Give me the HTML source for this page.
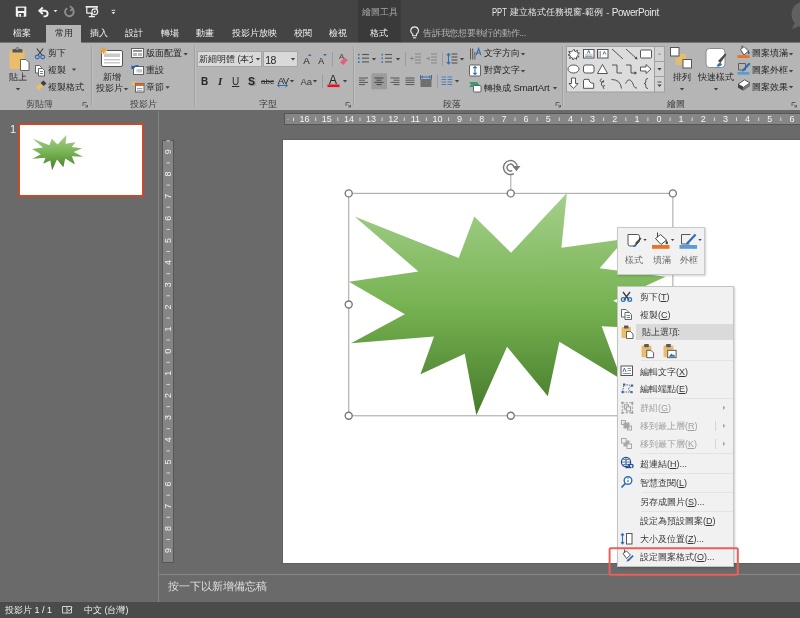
<!DOCTYPE html>
<html lang="zh-Hant">
<head>
<meta charset="utf-8">
<title>PPT 建立格式任務視窗-範例 - PowerPoint</title>
<style>
*{box-sizing:border-box;margin:0;padding:0}
html,body{width:800px;height:618px;overflow:hidden;background:#6a6a6a}
body{position:relative;font-family:"Liberation Sans",sans-serif;font-size:10px;color:#262626;line-height:1}
.abs,.t{position:absolute}
.t{white-space:nowrap;line-height:1;will-change:opacity}
#titlebar{left:0;top:0;width:800px;height:42px;background:#444}
#ctx{left:358px;top:0;width:43px;height:42px;background:#3a3a3a}
#ribbon{left:0;top:42px;width:800px;height:69px;background:#b5b5b5;box-shadow:0 1px 0 #5e5e5e;border-top:1px solid #747474}
#tabactive{left:46px;top:25px;width:35px;height:19px;background:#b5b5b5}
.tab{top:29px;color:#f0f0f0;font-size:9px}
.la{font-size:10px;letter-spacing:-0.550px}
.gl{color:#3c3c3c;font-size:8.800px;margin-top:0.500px}
.sep{top:46px;width:1px;height:60px;background:#a0a0a0;box-shadow:1px 0 0 #c0c0c0}
.rt{color:#262626;font-size:8.800px;margin-top:0.400px}
#work{left:0;top:110px;width:800px;height:490px;background:#6a6a6a}
#status{left:0;top:602px;width:800px;height:16px;background:#4b4b4b}
#slide{left:283px;top:139.500px;width:517px;height:423.500px;background:#fff;box-shadow:0 0 0 1px #606060}
#thumb{left:19.300px;top:124.300px;width:123.800px;height:71.400px;background:#fff;box-shadow:inset 0 0 0 1px #d9451f,0 0 0 0.700px #d9451f}
#vdiv{left:157.500px;top:111px;width:1.500px;height:491px;background:#848484}
#hruler{left:285px;top:113px;width:515px;height:12px;background:#8a8a8a}
#vruler{left:162px;top:140px;width:12px;height:423px;background:#8a8a8a}
#notesline{left:159px;top:574px;width:641px;height:1px;background:#868686}
.m{color:#383838;font-size:9px;left:640px}
.md{color:#a0a0a0}
.msep{left:641px;width:92px;height:1px;background:#e3e3e3}
</style>
</head>
<body>
<div class="abs" id="titlebar"></div>
<div class="abs" id="ctx"></div>
<div class="abs" id="ribbon"></div>
<div class="abs" id="tabactive"></div>
<div class="abs" id="work"></div>
<div class="abs" id="vdiv"></div>
<div class="abs" id="thumb"></div>
<svg class="abs" style="left:0;top:110px;width:800px;height:460px;font-family:'Liberation Sans',sans-serif;font-size:9px;will-change:opacity" viewBox="0 110 800 460">
<rect x="284.500" y="113.500" width="520" height="11" fill="#868686" stroke="#565656" stroke-width="1"/><rect x="162.500" y="140.500" width="11" height="422" fill="#858585" stroke="#565656" stroke-width="1"/><g fill="#f4f4f4"><text x="304.6" y="122.300" text-anchor="middle">16</text><text x="326.8" y="122.300" text-anchor="middle">15</text><text x="348.9" y="122.300" text-anchor="middle">14</text><text x="371.1" y="122.300" text-anchor="middle">13</text><text x="393.2" y="122.300" text-anchor="middle">12</text><text x="415.4" y="122.300" text-anchor="middle">11</text><text x="437.5" y="122.300" text-anchor="middle">10</text><text x="459.6" y="122.300" text-anchor="middle">9</text><text x="481.8" y="122.300" text-anchor="middle">8</text><text x="504.0" y="122.300" text-anchor="middle">7</text><text x="526.1" y="122.300" text-anchor="middle">6</text><text x="548.2" y="122.300" text-anchor="middle">5</text><text x="570.4" y="122.300" text-anchor="middle">4</text><text x="592.5" y="122.300" text-anchor="middle">3</text><text x="614.7" y="122.300" text-anchor="middle">2</text><text x="636.9" y="122.300" text-anchor="middle">1</text><text x="659.0" y="122.300" text-anchor="middle">0</text><text x="681.1" y="122.300" text-anchor="middle">1</text><text x="703.3" y="122.300" text-anchor="middle">2</text><text x="725.5" y="122.300" text-anchor="middle">3</text><text x="747.6" y="122.300" text-anchor="middle">4</text><text x="769.8" y="122.300" text-anchor="middle">5</text><text x="791.9" y="122.300" text-anchor="middle">6</text><text transform="translate(171.300 151.8) rotate(-90)" text-anchor="middle">9</text><text transform="translate(171.300 174.0) rotate(-90)" text-anchor="middle">8</text><text transform="translate(171.300 196.2) rotate(-90)" text-anchor="middle">7</text><text transform="translate(171.300 218.3) rotate(-90)" text-anchor="middle">6</text><text transform="translate(171.300 240.4) rotate(-90)" text-anchor="middle">5</text><text transform="translate(171.300 262.6) rotate(-90)" text-anchor="middle">4</text><text transform="translate(171.300 284.8) rotate(-90)" text-anchor="middle">3</text><text transform="translate(171.300 306.9) rotate(-90)" text-anchor="middle">2</text><text transform="translate(171.300 329.1) rotate(-90)" text-anchor="middle">1</text><text transform="translate(171.300 351.2) rotate(-90)" text-anchor="middle">0</text><text transform="translate(171.300 373.3) rotate(-90)" text-anchor="middle">1</text><text transform="translate(171.300 395.5) rotate(-90)" text-anchor="middle">2</text><text transform="translate(171.300 417.6) rotate(-90)" text-anchor="middle">3</text><text transform="translate(171.300 439.8) rotate(-90)" text-anchor="middle">4</text><text transform="translate(171.300 461.9) rotate(-90)" text-anchor="middle">5</text><text transform="translate(171.300 484.1) rotate(-90)" text-anchor="middle">6</text><text transform="translate(171.300 506.2) rotate(-90)" text-anchor="middle">7</text><text transform="translate(171.300 528.4) rotate(-90)" text-anchor="middle">8</text><text transform="translate(171.300 550.5) rotate(-90)" text-anchor="middle">9</text></g><path d="M315.7 117.500v3.500M337.8 117.500v3.500M360.0 117.500v3.500M382.1 117.500v3.500M404.3 117.500v3.500M426.4 117.500v3.500M448.6 117.500v3.500M470.7 117.500v3.500M492.9 117.500v3.500M515.0 117.500v3.500M537.2 117.500v3.500M559.3 117.500v3.500M581.5 117.500v3.500M603.6 117.500v3.500M625.8 117.500v3.500M647.9 117.500v3.500M670.1 117.500v3.500M692.2 117.500v3.500M714.4 117.500v3.500M736.5 117.500v3.500M758.7 117.500v3.500M780.8 117.500v3.500M293.5 117.500v3.500M288.0 118.800v1M166.500 162.9h3.500M166.500 185.1h3.500M166.500 207.2h3.500M166.500 229.4h3.500M166.500 251.5h3.500M166.500 273.7h3.500M166.500 295.8h3.500M166.500 318.0h3.500M166.500 340.1h3.500M166.500 362.3h3.500M166.500 384.4h3.500M166.500 406.6h3.500M166.500 428.7h3.500M166.500 450.9h3.500M166.500 473.0h3.500M166.500 495.2h3.500M166.500 517.3h3.500M166.500 539.5h3.500M166.500 140.8h3.500" stroke="#d8d8d8" stroke-width="1" fill="none"/></svg>
<div class="abs" id="slide"></div>
<div class="abs" id="notesline"></div>
<div class="abs" id="status"></div>
<div class="t" id="ttl" style="left:492.100px;top:7.500px;font-size:9.090px;color:#e6e6e6"><span class="la" style="letter-spacing:0;font-size:9.600px;display:inline-block;transform:scale(.8,1.040);transform-origin:0 80%">PPT</span></div><div class="t tt" style="left:510.100px;top:7px;font-size:9.090px;color:#e6e6e6"><span class="la" style="visibility:hidden;letter-spacing:-6.670px">P</span>建立格式任務視窗</div><div class="t tt" style="left:582.100px;top:7.500px;font-size:9.090px;color:#e6e6e6"><span class="la" style="visibility:hidden;letter-spacing:-6.670px">P</span>-</div><div class="t tt" style="left:585.400px;top:7px;font-size:9.090px;color:#e6e6e6"><span class="la" style="visibility:hidden;letter-spacing:-6.670px">P</span>範例</div><div class="t tt" style="left:606.300px;top:7.500px;font-size:9.090px;color:#e6e6e6"><span class="la" style="visibility:hidden;letter-spacing:-6.670px">P</span>-</div><div class="t tt" style="left:611.700px;top:7.500px;font-size:9.090px;color:#e6e6e6"><span class="la" style="letter-spacing:-0.400px">PowerPoint</span></div>
<div class="t" style="left:362px;top:8px;font-size:9px;color:#a6a6a6">繪圖工具</div>
<div class="t tab" style="left:13px">檔案</div>
<div class="t tab" style="left:54.500px;color:#2b2b2b">常用</div>
<div class="t tab" style="left:90px">插入</div>
<div class="t tab" style="left:125px">設計</div>
<div class="t tab" style="left:161px">轉場</div>
<div class="t tab" style="left:196px">動畫</div>
<div class="t tab" style="left:232px">投影片放映</div>
<div class="t tab" style="left:294px">校閱</div>
<div class="t tab" style="left:329px">檢視</div>
<div class="t tab" style="left:370px">格式</div>
<div class="t tab" style="left:423px;color:#b2b2b2;letter-spacing:-0.250px">告訴我您想要執行的動作...</div>
<svg class="abs" style="left:0;top:0;width:440px;height:42px" viewBox="0 0 440 42">
<rect x="15.800" y="6.500" width="10.500" height="10.200" rx="0.800" fill="#f2f2f2"/><rect x="17.800" y="7.800" width="6.500" height="3.200" fill="#444"/><rect x="18.300" y="13" width="5.500" height="3.700" fill="#444"/><rect x="19.300" y="14" width="1.700" height="2.700" fill="#f2f2f2"/>
<g fill="none" stroke="#f2f2f2"><path d="M40 10.800H45.500A2.900 2.900 0 0 1 45.500 16.400H43.500" stroke-width="1.900"/><path d="M42.800 7.500L39.300 10.800L42.800 14.100" stroke-width="1.900"/></g>
<path d="M53.600 10h3.800l-1.900 2.300z" fill="#e6e6e6"/>
<g fill="none" stroke="#909090"><path d="M72 8.500A4.300 4.300 0 1 1 67.200 8.200" stroke-width="1.900"/><path d="M69.800 6.200L72.800 8.300L70.200 11" stroke-width="1.500"/></g>
<g fill="none" stroke="#f2f2f2" stroke-width="1.300"><path d="M85.500 6.800h12.500"/><rect x="86.800" y="6.800" width="10" height="6.300" stroke-width="1.200"/><path d="M91.800 13.100V16M88.800 16.600H94.800"/><circle cx="94.800" cy="11.800" r="2.900" fill="#444" stroke-width="1.100"/><path d="M94 10.500L96.200 11.800L94 13.100Z" fill="#f2f2f2" stroke="none"/></g>
<path d="M111.600 10.300h3.600" stroke="#e0e0e0" stroke-width="1"/><path d="M111.500 12h3.800l-1.900 2.200z" fill="#e0e0e0"/>
<g fill="none" stroke="#e8e8e8" stroke-width="1.1" transform="translate(2.2 0.3)"><path d="M410.5 35.5V33.8C408.8 32.6 408.3 31 408.6 29.6A3.9 3.9 0 0 1 416.2 29.6C416.5 31 416 32.6 414.300 33.8V35.500Z"/><path d="M410.8 37.500H414"/></g>
</svg>
<svg class="abs" style="left:780px;top:0;width:20px;height:40px" viewBox="780 0 20 40"><circle cx="804.500" cy="14.500" r="13" fill="#616161"/><path d="M791.800 29.200l3-6.500 5.500 3z" fill="#616161"/></svg>
<!--TITLE-->
<div class="abs sep" style="left:91px"></div>
<div class="abs sep" style="left:194px"></div>
<div class="abs sep" style="left:353px"></div>
<div class="abs sep" style="left:562px"></div>
<div class="t rt" style="left:9px;top:73px">貼上</div>
<div class="t rt" style="left:48px;top:49px">剪下</div>
<div class="t rt" style="left:48px;top:66px">複製</div>
<div class="t rt" style="left:48px;top:83px">複製格式</div>
<div class="t gl" style="left:26px;top:99px">剪貼簿</div>
<div class="t rt" style="left:103px;top:73px">新增</div>
<div class="t rt" style="left:96px;top:84px">投影片</div>
<div class="t rt" style="left:146px;top:49px">版面配置</div>
<div class="t rt" style="left:146px;top:66px">重設</div>
<div class="t rt" style="left:146px;top:83px">章節</div>
<div class="t gl" style="left:130px;top:99px">投影片</div>
<div class="abs" style="left:197px;top:51px;width:65px;height:16px;background:#d9d9d9;border:1px solid #a6a6a6"></div>
<div class="abs" style="left:263px;top:51px;width:35px;height:16px;background:#d9d9d9;border:1px solid #a6a6a6"></div>
<div class="t rt" style="left:199px;top:55px;width:54px;overflow:hidden">新細明體 (本文</div>
<div class="t rt" style="left:265.300px;top:54.300px;font-size:10.500px;letter-spacing:-0.600px">18</div>
<div class="t gl" style="left:259px;top:99px">字型</div>
<div class="t rt" style="left:201px;top:76.500px;font-weight:bold;font-size:10px">B</div>
<div class="t rt" style="left:218px;top:76px;font-style:italic;font-weight:bold;font-family:'Liberation Serif',serif;font-size:11px">I</div>
<div class="t rt" style="left:232px;top:76.500px;font-size:10px;text-decoration:underline">U</div>
<div class="t rt" style="left:248px;top:76px;font-size:10.500px;font-weight:bold;text-shadow:1px 1px 1px #888">S</div>
<div class="t rt" style="left:261px;top:77.500px;font-size:8px;text-decoration:line-through;color:#2e2e2e">abc</div>
<div class="t rt" style="left:277.800px;top:75.500px;font-size:9.500px;letter-spacing:-0.800px">AV</div>
<div class="t rt" style="left:300.500px;top:77px;font-size:9.500px;color:#3a3a3a">Aa</div>
<div class="t rt" style="left:329px;top:74px;font-size:12px">A</div>
<div class="t rt" style="left:303.300px;top:55.200px;font-size:9.800px;letter-spacing:-.5px">A</div>
<div class="t rt" style="left:318.300px;top:56.200px;font-size:8.800px">A</div>
<div class="t rt" style="left:339px;top:53px;font-size:8px;color:#444">A</div>
<div class="t rt" style="left:484px;top:49px">文字方向</div>
<div class="t rt" style="left:484px;top:66px">對齊文字</div>
<div class="t rt" style="left:484px;top:83px">轉換成 <span style="font-size:9.500px;letter-spacing:-0.200px">SmartArt</span></div>
<div class="t gl" style="left:443px;top:99px">段落</div>
<div class="t rt" style="left:673px;top:73px">排列</div>
<div class="t rt" style="left:698px;top:73px">快速樣式</div>
<div class="t rt" style="left:751.5px;top:49px">圖案填滿</div>
<div class="t rt" style="left:751.5px;top:66px">圖案外框</div>
<div class="t rt" style="left:751.5px;top:82.5px">圖案效果</div>
<div class="t gl" style="left:667px;top:99px">繪圖</div>
<svg class="abs" style="left:0;top:42px;width:800px;height:68px" viewBox="0 42 800 68">
<path d="M15.8 88h4.4l-2.2 2.4z" fill="#444"/><path d="M71.8 68.500h4.400l-2.200 2.400z" fill="#444"/><path d="M123.8 88h4.4l-2.2 2.4z" fill="#444"/><path d="M183.500 53h4.400l-2.200 2.400z" fill="#444"/><path d="M165.400 86.300h4.400l-2.200 2.400z" fill="#444"/><path d="M255.8 58h4.4l-2.2 2.4z" fill="#444"/><path d="M290.8 58h4.4l-2.2 2.4z" fill="#444"/><path d="M289.8 80h4.4l-2.2 2.4z" fill="#444"/><path d="M312.8 80h4.4l-2.2 2.4z" fill="#444"/><path d="M342.8 80h4.4l-2.2 2.4z" fill="#444"/><path d="M371.8 58h4.4l-2.2 2.4z" fill="#444"/><path d="M395.8 58h4.4l-2.2 2.4z" fill="#444"/><path d="M459.8 58h4.4l-2.2 2.4z" fill="#444"/><path d="M454.8 80h4.4l-2.2 2.4z" fill="#444"/><path d="M520.8 53h4.4l-2.2 2.4z" fill="#444"/><path d="M520.8 70h4.4l-2.2 2.4z" fill="#444"/><path d="M552.8 87h4.4l-2.2 2.4z" fill="#444"/><path d="M679.8 88h4.4l-2.2 2.4z" fill="#444"/><path d="M713.8 88h4.4l-2.2 2.4z" fill="#444"/><path d="M788.8 53h4.4l-2.2 2.4z" fill="#444"/><path d="M788.8 70h4.4l-2.2 2.4z" fill="#444"/><path d="M788.8 86h4.4l-2.2 2.4z" fill="#444"/><path d="M83 106.0V102.5H86.5M85 104.5L87.5 107.0M87.5 105.0V107.0H85.5" fill="none" stroke="#555" stroke-width="0.9"/><path d="M346 106.0V102.5H349.5M348 104.5L350.5 107.0M350.5 105.0V107.0H348.5" fill="none" stroke="#555" stroke-width="0.9"/><path d="M556 106.0V102.5H559.5M558 104.5L560.5 107.0M560.5 105.0V107.0H558.5" fill="none" stroke="#555" stroke-width="0.9"/><path d="M792 106.0V102.5H795.5M794 104.5L796.5 107.0M796.5 105.0V107.0H794.5" fill="none" stroke="#555" stroke-width="0.9"/><rect x="9.5" y="50" width="15" height="19" rx="1" fill="#e9bd6a"/><path d="M12.500 52.500v-2.500q0-1 1-1h2q.3-1.700 2-1.700t2 1.700h2q1 0 1 1v2.500z" fill="#555"/><rect x="16.300" y="48.300" width="2.400" height="1.300" fill="#b5b5b5"/><path d="M20.5 59.500h5.500l3 3v8h-8.500z" fill="#fff" stroke="#555" stroke-width="0.9"/><g fill="none" stroke="#3f3f3f" stroke-width="1.2"><path d="M36.800 48.500L42.300 55.500M43.200 48.500L37.700 55.500"/></g><g fill="none" stroke="#2e6db4" stroke-width="1.2"><circle cx="37.300" cy="57" r="1.900"/><circle cx="42.700" cy="57" r="1.900"/></g><g fill="#fff" stroke="#555" stroke-width="0.9"><path d="M35.500 65.500h4l2 2v5.500h-6z"/><path d="M38.500 68.500h4l2 2v5.500h-6z"/></g><path d="M40 71.500h3M40 73.500h3" stroke="#2e6db4" stroke-width="0.8"/><path d="M36 87.500l4.500-4.500 3 3-4.500 4.500z" fill="#e9bd6a"/><path d="M40.500 83l3-2.500 3 3-2.800 2.500z" fill="#3f3f3f"/><rect x="101.500" y="50.500" width="21" height="16" rx="1.500" fill="#fff" stroke="#555" stroke-width="1"/><rect x="104" y="53.500" width="16" height="3.500" fill="#c9c9c9"/><rect x="104" y="59" width="16" height="1.500" fill="#c9c9c9"/><rect x="104" y="62" width="16" height="1.500" fill="#c9c9c9"/><g stroke="#e5a43b" stroke-width="1.100"><path d="M100 50.500h7M103.500 47v7M101 48l5 5M106 48l-5 5"/></g><rect x="131.500" y="48.500" width="12" height="9" fill="#fff" stroke="#555" stroke-width="0.9"/><rect x="133" y="50" width="9" height="1.800" fill="#8a8a8a"/><rect x="133" y="53" width="4" height="3" fill="#b9b9b9"/><rect x="138" y="53" width="4" height="3" fill="#b9b9b9"/><rect x="133.500" y="66.500" width="10" height="8" fill="#fff" stroke="#555" stroke-width="0.9"/><rect x="136.500" y="69" width="5.500" height="3.500" fill="#c9c9c9"/><path d="M138.500 66.200a4 4 0 0 0-5.500 2.300" fill="none" stroke="#1f5fa8" stroke-width="1.500"/><path d="M131.300 65.300l.3 4.200 3.600-1.700z" fill="#1f5fa8"/><rect x="131.500" y="81.500" width="4" height="3.500" fill="#e9bd6a"/><rect x="135.500" y="83.500" width="8.500" height="8.500" fill="#fff" stroke="#555" stroke-width="0.9"/><rect x="135.500" y="83.500" width="8.500" height="2.500" fill="#d9683c"/><path d="M137 88.500h5.500M137 90.300h5.500" stroke="#888" stroke-width="0.8"/><path d="M308 56h3.600l-1.800-2.300z" fill="#2e6db4"/><path d="M323.200 54h3.600l-1.800 2.300z" fill="#2e6db4"/><path d="M332.500 52v14" stroke="#9c9c9c" stroke-width="1"/><path d="M322.500 75v13" stroke="#9c9c9c" stroke-width="1"/><path d="M340 62.500l4.500-5 3.300 2.600-4.500 5z" fill="#e0607e"/><path d="M277.500 85.500h10M279.500 83.800l-2 1.700 2 1.700M285.500 83.800l2 1.700-2 1.700" fill="none" stroke="#2e6db4" stroke-width="1"/><rect x="327.500" y="84.500" width="12" height="2.600" fill="#e81123"/><path d="M362 54.5h7" stroke="#555" stroke-width="1.1"/><path d="M362 58.2h7" stroke="#555" stroke-width="1.1"/><path d="M362 61.9h7" stroke="#555" stroke-width="1.1"/><rect x="358" y="53.8" width="1.600" height="1.600" fill="#2e6db4"/><rect x="358" y="57.5" width="1.600" height="1.600" fill="#2e6db4"/><rect x="358" y="61.199999999999996" width="1.600" height="1.600" fill="#2e6db4"/><path d="M385 54.5h7" stroke="#555" stroke-width="1.1"/><path d="M385 58.2h7" stroke="#555" stroke-width="1.1"/><path d="M385 61.9h7" stroke="#555" stroke-width="1.1"/><rect x="381.500" y="53.8" width="1.300" height="1.800" fill="#2e6db4"/><rect x="381.500" y="57.5" width="1.300" height="1.800" fill="#2e6db4"/><rect x="381.500" y="61.199999999999996" width="1.300" height="1.800" fill="#2e6db4"/><path d="M405.500 52v14M442.500 52v14M437.500 75v13" stroke="#9c9c9c" stroke-width="1"/><path d="M415 54h6" stroke="#8a8a8a" stroke-width="1.1"/><path d="M415 57h6" stroke="#8a8a8a" stroke-width="1.1"/><path d="M415 60h6" stroke="#8a8a8a" stroke-width="1.1"/><path d="M415 63h6" stroke="#8a8a8a" stroke-width="1.1"/><path d="M410.500 58.500h4M412.300 56.800l-1.800 1.700 1.800 1.700" fill="none" stroke="#8a8a8a" stroke-width="1"/><path d="M431 54h6" stroke="#8a8a8a" stroke-width="1.1"/><path d="M431 57h6" stroke="#8a8a8a" stroke-width="1.1"/><path d="M431 60h6" stroke="#8a8a8a" stroke-width="1.1"/><path d="M431 63h6" stroke="#8a8a8a" stroke-width="1.1"/><path d="M426 58.500h4M428.200 56.800l1.800 1.700-1.800 1.700" fill="none" stroke="#8a8a8a" stroke-width="1"/><path d="M451.5 54h6" stroke="#555" stroke-width="1.1"/><path d="M451.5 57h6" stroke="#555" stroke-width="1.1"/><path d="M451.5 60h6" stroke="#555" stroke-width="1.1"/><path d="M451.5 63h6" stroke="#555" stroke-width="1.1"/><path d="M448.500 53.500v10.500M446.800 55.300l1.700-1.800 1.700 1.800M446.800 62.200l1.700 1.800 1.700-1.800" fill="none" stroke="#2e6db4" stroke-width="1.100"/><rect x="371.500" y="73.300" width="15.500" height="16" fill="#9b9b9b"/><path d="M359 78.00h9" stroke="#555" stroke-width="1"/><path d="M359 80.20h6" stroke="#555" stroke-width="1"/><path d="M359 82.40h9" stroke="#555" stroke-width="1"/><path d="M359 84.60h6" stroke="#555" stroke-width="1"/><path d="M374.5 78.00h9" stroke="#444" stroke-width="1"/><path d="M376.5 80.20h5" stroke="#444" stroke-width="1"/><path d="M374.5 82.40h9" stroke="#444" stroke-width="1"/><path d="M376.5 84.60h5" stroke="#444" stroke-width="1"/><path d="M390.5 78.00h9" stroke="#555" stroke-width="1"/><path d="M393.5 80.20h6" stroke="#555" stroke-width="1"/><path d="M390.5 82.40h9" stroke="#555" stroke-width="1"/><path d="M393.5 84.60h6" stroke="#555" stroke-width="1"/><path d="M405.5 78.00h9" stroke="#555" stroke-width="1.0"/><path d="M405.5 80.20h9" stroke="#555" stroke-width="1.0"/><path d="M405.5 82.40h9" stroke="#555" stroke-width="1.0"/><path d="M405.5 84.60h9" stroke="#555" stroke-width="1.0"/><rect x="420.500" y="79" width="11" height="8" fill="#6f6f6f"/><path d="M420.500 75v4.500M431.500 75v4.500M421.500 77h9M423 75.700l-1.500 1.300 1.500 1.300M429 75.700l1.500 1.300-1.500 1.300" fill="none" stroke="#2e6db4" stroke-width="1"/><path d="M441.5 77.00h4.7" stroke="#4a7ebb" stroke-width="1.0"/><path d="M441.5 79.50h4.7" stroke="#4a7ebb" stroke-width="1.0"/><path d="M441.5 82.00h4.7" stroke="#4a7ebb" stroke-width="1.0"/><path d="M441.5 84.50h4.7" stroke="#4a7ebb" stroke-width="1.0"/><path d="M447.5 77.00h4.7" stroke="#4a7ebb" stroke-width="1.0"/><path d="M447.5 79.50h4.7" stroke="#4a7ebb" stroke-width="1.0"/><path d="M447.5 82.00h4.7" stroke="#4a7ebb" stroke-width="1.0"/><path d="M447.5 84.50h4.7" stroke="#4a7ebb" stroke-width="1.0"/><path d="M470.500 48.500v11M472.700 48.500v11M474.900 52v7.500" stroke="#555" stroke-width="1"/><path d="M476.300 55l2.300-6.500 2.300 6.500M477.100 53h3.200" fill="none" stroke="#2e6db4" stroke-width="1.100"/><rect x="469.500" y="65" width="11" height="11" rx="1" fill="#fff" stroke="#555" stroke-width="0.9"/><path d="M475 66.500v8M473.300 68.200l1.700-1.700 1.700 1.700M473.300 72.800l1.700 1.700 1.700-1.700" fill="none" stroke="#2e6db4" stroke-width="1.100"/><path d="M469 82h8l2 2.500-2 2.500h-8l2-2.500z" fill="#3a9b6c"/><rect x="473.500" y="85.500" width="7.500" height="6.500" rx="1" fill="#fff" stroke="#555" stroke-width="0.9"/><rect x="566.500" y="46.500" width="88" height="45.500" fill="#dcdcdc" stroke="#a0a0a0" stroke-width="1"/><g fill="#d2d2d2" stroke="#a0a0a0" stroke-width="1"><rect x="654.500" y="46.500" width="10" height="15"/><rect x="654.500" y="61.500" width="10" height="15"/><rect x="654.500" y="76.500" width="10" height="15.500"/></g><path d="M657.500 55h4l-2-2.400z" fill="#a8a8a8"/><path d="M657.3 68h4.4l-2.2 2.4z" fill="#444"/><path d="M657.3 84.5h4.4l-2.2 2.4z" fill="#444"/><path d="M657.500 82h4" stroke="#444" stroke-width="0.9"/><path transform="translate(1 .7)" d="M573 48.500l1 2.500 2.500-1.500-.5 2.500 2.500.5-2 1.700 1.500 2-2.500 0 0 2.500-2-1.500-1.500 2-1-2.500-2.500 1 1-2.500-2.500-1 2.200-1.200-1.500-2.300 2.800.5z" fill="#fff" stroke="#444" stroke-width="0.9"/><rect x="583.500" y="49.500" width="10.500" height="8.500" fill="#fff" stroke="#444" stroke-width="0.9"/><path d="M585 55h7.500M585 56.500h7.500" stroke="#777" stroke-width="0.700"/><path d="M587.300 53.500l1.400-3 1.400 3" fill="none" stroke="#2e6db4" stroke-width="0.9"/><rect x="597.500" y="49.500" width="10.500" height="8.500" fill="#fff" stroke="#444" stroke-width="0.9"/><path d="M599 51v6M600.500 51v6" stroke="#777" stroke-width="0.700"/><path d="M603 54.500l1.400-3 1.400 3" fill="none" stroke="#2e6db4" stroke-width="0.9"/><path d="M612 49l11 10" fill="none" stroke="#444" stroke-width="0.9"/><path d="M626 49l10.500 9.500" fill="none" stroke="#444" stroke-width="0.9"/><path d="M637.500 59.500l-3-0.800 2.200-2.200z" fill="#444"/><rect x="640.500" y="50" width="11" height="8" rx="0.800" fill="#fff" stroke="#444" stroke-width="0.9"/><ellipse cx="573.500" cy="69" rx="5.500" ry="4" fill="#fff" stroke="#444" stroke-width="0.9"/><rect x="583.500" y="65" width="10.500" height="8" rx="2" fill="#fff" stroke="#444" stroke-width="0.9"/><path d="M602.500 64.500l5 9h-10z" fill="#fff" stroke="#444" stroke-width="0.9"/><path d="M612 65h5v8h5" fill="none" stroke="#444" stroke-width="0.9"/><path d="M626 65h5v8h4" fill="none" stroke="#444" stroke-width="0.9"/><path d="M637 73l-2.500-1.700v3.400z" fill="#444"/><path d="M640.500 67h5.500v-2.500l5 4.500-5 4.500v-2.500h-5.500z" fill="#fff" stroke="#444" stroke-width="0.9"/><path d="M571.500 78h4v5.500h2.500l-4.500 5-4.500-5h2.500z" fill="#fff" stroke="#444" stroke-width="0.9"/><path d="M585 79.300h4q0 4 4.700 4v5h-10.200v-7.500q0-1.500 1.500-1.500z" fill="#fff" stroke="#444" stroke-width="0.9"/><path d="M601.500 78.500q-3 2.500 0 3.500t2-1.500q-3 2-2 4.500t3 .500q-2.500 1.500-.500 3.500" fill="none" stroke="#444" stroke-width="0.9"/><path d="M611.500 79.500q9 0 10 9" fill="none" stroke="#444" stroke-width="0.9"/><path d="M625.500 83.500q2.500-5 5-3.200t3 5.200q1.200 2.800 3.500 2.700" fill="none" stroke="#444" stroke-width="0.9"/><path d="M648 78.500q-2.200 0-2.200 1.800v1.700q0 1.500-1.800 1.500q1.800 0 1.800 1.500v1.700q0 1.800 2.200 1.800" fill="none" stroke="#444" stroke-width="0.9"/><rect x="679" y="54" width="7" height="7" fill="#e9bd6a"/><rect x="675.500" y="58" width="7" height="7" fill="#e9bd6a" opacity="0.85"/><rect x="670.500" y="47.500" width="8.500" height="8.500" fill="#fff" stroke="#555" stroke-width="1"/><rect x="683" y="59.500" width="8.500" height="8.500" fill="#fff" stroke="#555" stroke-width="1"/><rect x="706" y="48.500" width="19" height="19" rx="3.500" fill="#fff" stroke="#8a8a8a" stroke-width="1"/><path d="M726.500 54.500l-6 8.500-2.500-2 7-7.500z" fill="#4a4a4a"/><path d="M716.500 66.500q1-3 3.500-4l2 1.700q-1 2.500-5.500 2.300z" fill="#2e6db4"/><path d="M740.500 49.500l3.500-3 4.500 4.500-4.500 4z" fill="#fff" stroke="#444" stroke-width="0.9"/><path d="M742 45.500v3" stroke="#444" stroke-width="0.9"/><path d="M748.500 50.500q1.200 1.600 1.200 2.400a1 1 0 0 1-2 0q0-.8.800-2.400z" fill="#1f5fa8"/><rect x="737.500" y="55.200" width="12" height="2.800" fill="#e8742c"/><path d="M738.500 63.500h7v6.500h-7z" fill="none" stroke="#555" stroke-width="0.9"/><path d="M742.500 69.500l6.500-7 1.500 1.500-6.500 7-2.200.7z" fill="#2e6db4"/><rect x="737.500" y="71.900" width="12" height="2.800" fill="#5b9bd5"/><g transform="translate(0 -1.200)"><path d="M738 85.500l6.500-4.500 5.500 3-6.500 4.500z" fill="#fff" stroke="#444" stroke-width="0.9"/><path d="M738 85.500v3.500l5.500 3v-3.500z" fill="#444"/><path d="M743.500 88.500l6.500-4.500v3.500l-6.500 4.500z" fill="#777"/></g></svg>
<!--RIBBON-->
<svg class="abs" style="left:348.700px;top:193.400px;width:324.150px;height:222.350px;overflow:visible" viewBox="0 0 21600 21600" preserveAspectRatio="none">
<defs><linearGradient id="gg" x1="0" y1="0" x2="0" y2="1"><stop offset="0" stop-color="#a5d08c"/><stop offset="0.5" stop-color="#77b352"/><stop offset="1" stop-color="#467a2b"/></linearGradient></defs>
<path id="seal" fill="url(#gg)" d="M10800 5800L14522 0L14155 5325L18380 4457L16702 7315L21097 8137L17607 10475L21600 13290L16837 12942L18145 18095L14020 14457L13247 19737L10532 14935L8485 21600L7715 15627L4762 17617L5667 13937L135 14587L3722 11775L0 8615L4627 7617L370 2295L7312 6320L8352 2295Z"/>
</svg>
<svg class="abs" style="left:32.300px;top:135px;width:51.200px;height:35.300px" viewBox="0 0 21600 21600" preserveAspectRatio="none"><use href="#seal"/></svg>
<svg class="abs" style="left:340px;top:155px;width:345px;height:270px" viewBox="340 155 345 270">
<g fill="none" stroke="#b2b2b2" stroke-width="1.2"><rect x="348.7" y="193.4" width="324.15" height="222.35"/><line x1="510.77" y1="175" x2="510.77" y2="193.4"/></g>
<g fill="#fff" stroke="#787878" stroke-width="1.4"><circle cx="348.70" cy="193.40" r="3.500"/><circle cx="510.77" cy="193.40" r="3.500"/><circle cx="672.85" cy="193.40" r="3.500"/><circle cx="348.70" cy="304.57" r="3.500"/><circle cx="672.85" cy="304.57" r="3.500"/><circle cx="348.70" cy="415.75" r="3.500"/><circle cx="510.77" cy="415.75" r="3.500"/><circle cx="672.85" cy="415.75" r="3.500"/></g>
<g fill="none" stroke="#787878" stroke-width="1.400"><path d="M517.500 167.500A7 7 0 1 0 513.800 173.700"/><path d="M514 167.500A3.500 3.500 0 1 0 512.200 170.600"/></g>
<path d="M512.500 166L520.500 166L516.300 171.200Z" fill="#787878"/>
</svg>
<!--SHAPE-->
<div class="abs" style="left:617px;top:227px;width:88px;height:48px;background:#f1f1f1;border:1px solid #c8c8c8;box-shadow:1px 1px 2px rgba(0,0,0,.18)"></div>
<div class="t" style="left:625px;top:256.300px;font-size:8.800px;color:#6a6a6a">樣式</div>
<div class="t" style="left:652.5px;top:256.300px;font-size:8.800px;color:#6a6a6a">填滿</div>
<div class="t" style="left:680px;top:256.300px;font-size:8.800px;color:#6a6a6a">外框</div>
<div class="abs" style="left:617px;top:286px;width:117px;height:281px;background:#f1f1f1;border:1px solid #c4c4c4;box-shadow:1px 1px 2px rgba(0,0,0,.2)"></div>
<div class="abs" style="left:636px;top:323.500px;width:97px;height:16px;background:#dadada"></div>
<div class="t m" style="top:293px">剪下(<u>T</u>)</div>
<div class="t m" style="top:310.5px">複製(<u>C</u>)</div>
<div class="t m" style="top:328px;left:641.500px">貼上選項:</div>
<div class="t m" style="top:367.5px">編輯文字(<u>X</u>)</div>
<div class="t m" style="top:385px">編輯端點(<u>E</u>)</div>
<div class="t m md" style="top:404px">群組(<u>G</u>)</div>
<div class="t m md" style="top:422px">移到最上層(<u>R</u>)</div>
<div class="t m md" style="top:440px">移到最下層(<u>K</u>)</div>
<div class="t m" style="top:459.5px">超連結(<u>H</u>)...</div>
<div class="t m" style="top:478.5px">智慧查閱(<u>L</u>)</div>
<div class="t m" style="top:498px">另存成圖片(<u>S</u>)...</div>
<div class="t m" style="top:517px">設定為預設圖案(<u>D</u>)</div>
<div class="t m" style="top:535px">大小及位置(<u>Z</u>)...</div>
<div class="t m" style="top:553px">設定圖案格式(<u>O</u>)...</div>
<div class="abs msep" style="top:360px"></div>
<div class="abs msep" style="top:398px"></div>
<div class="abs msep" style="top:453px"></div>
<div class="abs msep" style="top:473px"></div>
<div class="abs msep" style="top:492px"></div>
<div class="abs msep" style="top:511px"></div>
<div class="abs" style="left:715px;top:421px;width:1px;height:10px;background:#d4d4d4"></div><div class="abs" style="left:715px;top:439px;width:1px;height:10px;background:#d4d4d4"></div>
<svg class="abs" style="left:600px;top:540px;width:150px;height:45px" viewBox="600 540 150 45"><rect x="609.600" y="548.300" width="128.200" height="26.500" rx="1" fill="none" stroke="#e9605a" stroke-width="2"/></svg>
<svg class="abs" style="left:617px;top:227px;width:120px;height:340px" viewBox="617 227 120 340">
<path d="M628 234.500h9.500q2 0 2 2v5l-4.500 4.500h-5q-2 0-2-2z" fill="#fff" stroke="#555" stroke-width="1"/><path d="M641.500 238.500l-5 6-1.500-1.200 5.300-5.800z" fill="#444"/><path d="M633 247q.5-2.500 2.500-3l1.300 1.200q-.8 2-3.800 1.800z" fill="#2e6db4"/><path d="M643.300 239h3.400l-1.700 2.100z" fill="#444"/><path d="M670.900 239h3.400l-1.700 2.100z" fill="#444"/><path d="M698.300 239h3.400l-1.700 2.100z" fill="#444"/><path d="M655.500 238.500l5-4 6 5.500-5.500 4.500z" fill="#fff" stroke="#444" stroke-width="1"/><path d="M657.500 232.500v4.500" stroke="#444" stroke-width="1"/><path d="M666.500 240q1.500 2 1.500 3a1.200 1.200 0 0 1-2.400 0q0-1 .9-3z" fill="#444"/><rect x="652" y="245" width="17.500" height="3.800" fill="#e8742c"/><path d="M681.500 234.500h9M681.500 234.500v9.500h8" fill="none" stroke="#555" stroke-width="1"/><path d="M686.800 242.300l8-8.500 1.600 1.500-8 8.500-2.400.8z" fill="#2e6db4"/><rect x="679.500" y="245" width="17.500" height="3.800" fill="#5b9bd5"/><path d="M623 292l6 8M630 292l-6 8" stroke="#3f3f3f" stroke-width="1.300" fill="none"/><circle cx="623.300" cy="299.500" r="1.900" fill="none" stroke="#2e6db4" stroke-width="1.200"/><circle cx="629.700" cy="299.500" r="1.900" fill="none" stroke="#2e6db4" stroke-width="1.200"/><g fill="#fff" stroke="#555" stroke-width="0.9"><path d="M621.500 309.500h4.500l2 2v5.500h-6.500z"/><path d="M625 312.500h4.500l2 2v5h-6.500z"/></g><path d="M626.500 315.500h3.500M626.500 317.500h3.500" stroke="#2e6db4" stroke-width="0.800"/><g transform="translate(621.5 325) scale(1.0)"><rect x="0" y="2" width="9.500" height="11" rx="0.800" fill="#e9bd6a"/><rect x="2.500" y="0.500" width="4.500" height="3" rx="0.600" fill="#5a5a5a"/><path d="M5 6.500h4l2.500 2.500v4.500h-6.500z" fill="#fff" stroke="#555" stroke-width="0.9"/></g><g transform="translate(641.5 343.5) scale(1.05)"><rect x="0" y="2" width="9.500" height="11" rx="0.800" fill="#e9bd6a"/><rect x="2.500" y="0.500" width="4.500" height="3" rx="0.600" fill="#5a5a5a"/><path d="M5 6.500h4l2.500 2.500v4.500h-6.500z" fill="#fff" stroke="#555" stroke-width="0.9"/></g><g transform="translate(663.500 343.500) scale(1.05)"><rect x="0" y="2" width="9.500" height="11" rx="0.800" fill="#e9bd6a"/><rect x="2.500" y="0.500" width="4.500" height="3" rx="0.600" fill="#5a5a5a"/><rect x="4" y="6.500" width="8" height="7" fill="#fff" stroke="#555" stroke-width="0.9"/><path d="M5 12.500l2.500-3 1.500 1.800 1-1 1.200 2.200z" fill="#2e6db4"/></g><rect x="621" y="366" width="11.500" height="9.500" fill="#fff" stroke="#555" stroke-width="1"/><path d="M622.800 372l1.600-4 1.600 4" fill="none" stroke="#2e6db4" stroke-width="0.9"/><path d="M627.500 368.500h3.500M627.500 370.500h3.500M622.800 373.500h8" stroke="#777" stroke-width="0.800"/><path d="M622.500 392l1.500-7.500 8 1-4 3.500 3.500 3z" fill="none" stroke="#555" stroke-width="0.900" stroke-dasharray="1.500 1"/><g fill="#2e6db4"><rect x="621.500" y="391" width="2.200" height="2.200"/><rect x="623" y="383.500" width="2.200" height="2.200"/><rect x="631" y="384.500" width="2.200" height="2.200"/><rect x="630.500" y="391" width="2.200" height="2.200"/></g><g fill="none" stroke="#9c9c9c" stroke-width="1"><rect x="622.300" y="402.800" width="10" height="10" stroke-dasharray="2.200 1.300"/><rect x="624.300" y="404.800" width="4.200" height="4.200"/><rect x="626.300" y="406.800" width="4.200" height="4.200" fill="#f1f1f1"/></g><g fill="#9c9c9c"><rect x="621.300" y="401.800" width="2" height="2"/><rect x="631.300" y="401.800" width="2" height="2"/><rect x="621.300" y="411.800" width="2" height="2"/><rect x="631.300" y="411.800" width="2" height="2"/></g><g fill="#f1f1f1" stroke="#a8a8a8" stroke-width="1"><rect x="621.500" y="420.500" width="4" height="4"/><rect x="627.500" y="426" width="4" height="4"/><rect x="624" y="423" width="5" height="5" fill="#a8a8a8"/></g><g fill="#f1f1f1" stroke="#a8a8a8" stroke-width="1"><rect x="624" y="441" width="5" height="5" fill="#a8a8a8"/><rect x="621.500" y="438.500" width="4.500" height="4.500"/><rect x="627" y="444" width="4.500" height="4.500"/></g><circle cx="626" cy="462" r="4.600" fill="#fff" stroke="#1f4e8c" stroke-width="1.200"/><path d="M621.500 462h9M626 457.500v9M623 459.200q3 1.600 6 0M623 464.800q3-1.600 6 0" fill="none" stroke="#1f4e8c" stroke-width="0.800"/><path d="M625.500 467.500h2.500a1.600 1.600 0 0 0 0-3.200M631 467.500h-1.500M629.500 464.300h2a1.600 1.600 0 0 1 0 3.200" fill="none" stroke="#1f4e8c" stroke-width="1.300"/><circle cx="628" cy="480.500" r="3.800" fill="#fff" stroke="#2e6db4" stroke-width="1.400"/><path d="M625.300 483.500l-3.800 4" stroke="#2e6db4" stroke-width="1.800"/><path d="M628 479.800v2.500" stroke="#2e6db4" stroke-width="1.100"/><circle cx="628" cy="478.500" r="0.600" fill="#2e6db4"/><rect x="626.500" y="533.500" width="5.500" height="10.500" fill="#fff" stroke="#555" stroke-width="1"/><path d="M622.500 533.500v10.500M621 535.300l1.500-1.800 1.500 1.800M621 542.200l1.500 1.800 1.500-1.800" fill="none" stroke="#2e6db4" stroke-width="1.100"/><path d="M623 553.500l3.500-2.500 4 4-4 3.500z" fill="#fff" stroke="#444" stroke-width="0.900"/><path d="M624.500 549.500v3" stroke="#444" stroke-width="0.900"/><path d="M626.500 561.500q.5-2.500 2.500-3l3.500-3.500 1.200 1.200-3.500 3.500q-.8 2-3.700 1.800z" fill="#2e6db4"/><path d="M723 405.500l2.400 2.300-2.400 2.300z" fill="#a8a8a8"/><path d="M723 423.500l2.400 2.300-2.400 2.300z" fill="#a8a8a8"/><path d="M723 441.500l2.400 2.300-2.400 2.300z" fill="#a8a8a8"/></svg>
<!--MENU-->
<div class="t" style="left:10px;top:124px;font-size:11px;color:#f0f0f0">1</div>
<div class="t" style="left:167.500px;top:580.500px;font-size:11px;color:#dedede">按一下以新增備忘稿</div>
<div class="t" style="left:5px;top:605.500px;font-size:9px;color:#f0f0f0">投影片 1 / 1</div>
<div class="t" style="left:84px;top:605.500px;font-size:9px;color:#f0f0f0">中文 (台灣)</div>
<svg class="abs" style="left:60px;top:604px;width:16px;height:12px" viewBox="60 603 16 12"><path d="M62.500 605.500h4.500v6.500h-4.500zM67 605.500h4.500v6.500h-4.500" fill="none" stroke="#e0e0e0" stroke-width="0.900"/><path d="M68 608.500l1.200 1.500 2.800-3.500" fill="none" stroke="#e0e0e0" stroke-width="0.900"/></svg>
<!--STATUS-->
</body>
</html>
